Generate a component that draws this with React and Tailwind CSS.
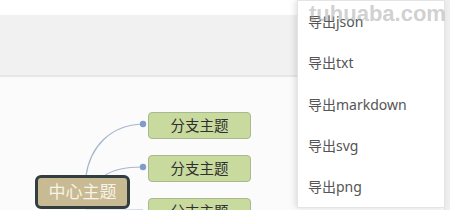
import React from 'react';

const cjk = { fontFamily: '"Noto Sans", "Noto Sans CJK SC", sans-serif' };

const exportItems = ['导出json', '导出txt', '导出markdown', '导出svg', '导出png'];

const Branch = () => (
    <div className="flex h-[27px] w-[103px] shrink-0 items-center justify-center rounded-[4px] border border-[#a9b98e] bg-[#c8da9e] text-[14.5px] text-[#2f2f2f]">
        分支主题
    </div>
);

const App = () => {
    return (
        <div className="relative h-[210px] w-[450px] overflow-hidden bg-[#fbfbfb]" style={cjk}>
            {/* header + toolbar */}
            <div className="h-[15px] bg-white" />
            <div className="h-[62px] border-b-2 border-[#e6e6e6] bg-[#f1f1f1]" />

            {/* canvas */}
            <div className="relative h-[133px]">
                <svg className="absolute left-0 top-0" width="450" height="133">
                    <g fill="none" stroke="#a6b8cc" strokeWidth="1.2">
                        <path d="M86 99 C 90 70, 110 48, 143 47" />
                        <path d="M104 99 C 112 93, 125 90, 143 90" />
                        <path d="M86 133 C 90 134, 110 133, 143 133" />
                    </g>
                    <circle cx="143" cy="47" r="3.2" fill="#7f9dc6" />
                    <circle cx="143" cy="90" r="3.2" fill="#7f9dc6" />
                </svg>
                <div className="absolute left-[148px] top-[35px] flex flex-col gap-[16px]">
                    <Branch />
                    <Branch />
                    <Branch />
                </div>
                <div className="absolute left-[35px] top-[98px] flex h-[34px] w-[95px] items-center justify-center rounded-[6px] border-[3px] border-[#333f3f] bg-[#c8ba92] text-[17px] text-[#f7f3e6]">
                    中心主题
                </div>
            </div>

            {/* right strip */}
            <div className="absolute right-0 top-0 h-full w-[6px] border-l border-[#e2e2e2] bg-[#efefef]" />

            {/* export menu */}
            <div className="absolute left-[297px] top-0 flex h-[208px] w-[148px] flex-col border border-[#e4e4e4] bg-white shadow-[-2px_0_6px_rgba(0,0,0,0.12)]">
                {exportItems.map((item) => (
                    <div key={item} className="flex h-[42px] items-center pl-[10px] text-[14px] text-[#555]">
                        {item}
                    </div>
                ))}
            </div>

            {/* watermark */}
            <div
                className="pointer-events-none absolute left-[309px] top-[-3px] text-[22px] font-bold text-[rgba(150,150,150,0.45)]"
                style={{ fontFamily: '"Liberation Sans", sans-serif' }}
            >
                tuhuaba.com
            </div>
        </div>
    );
};

export default App;
